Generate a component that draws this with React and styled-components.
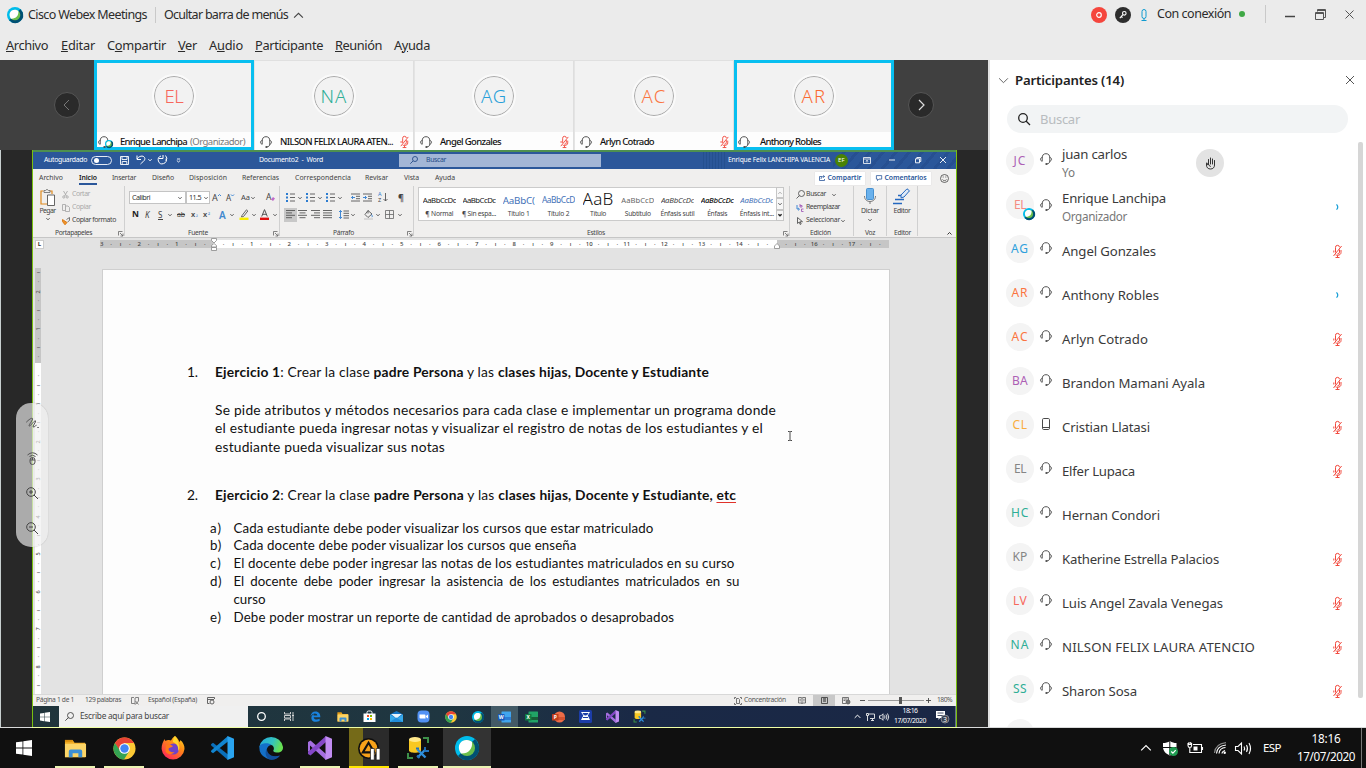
import React, { useLayoutEffect, useRef, useState } from "react";
import styled, { createGlobalStyle, css } from "styled-components";

const Global = createGlobalStyle`
  * { box-sizing: border-box; }
  html, body { margin: 0; padding: 0; overflow: hidden; }
  body { font-family: "Noto Sans", "Open Sans", sans-serif; color: #333; width: 1366px; height: 768px; }
`;

/* ---------- text fitted to a column width ---------- */

const Label = styled.span`
  display: block;
  flex: none;
  white-space: pre;
  line-height: 1;
  width: ${(p) => p.$w}px;
  margin-left: ${(p) => p.$ml || 0}px;
  font-size: ${(p) => p.$size || 8}px;
  font-weight: ${(p) => p.$weight || 400};
  font-style: ${(p) => (p.$italic ? "italic" : "normal")};
  color: ${(p) => p.$color || "inherit"};
  ${(p) => p.$justify && css`white-space: normal; text-align-last: justify;`}
`;

function T({ w, size, ml, weight, italic, color, justify, children }) {
  const inner = useRef(null);
  const [spacing, setSpacing] = useState(0);
  useLayoutEffect(() => {
    if (justify) return;
    const el = inner.current;
    const natural = el.getBoundingClientRect().width;
    const count = el.textContent.length;
    setSpacing((w - natural) / count);
  }, []);
  return (
    <Label $w={w} $size={size} $ml={ml} $weight={weight} $italic={italic} $color={color} $justify={justify}>
      <span ref={inner} style={{ letterSpacing: spacing }}>{children}</span>
    </Label>
  );
}

const Svg = styled.svg`
  display: block;
  flex: none;
  overflow: visible;
  width: ${(p) => p.$w}px;
  height: ${(p) => p.$h}px;
  margin-left: ${(p) => p.$ml || 0}px;
  margin-top: ${(p) => p.$mt || 0}px;
  fill: none;
  stroke-linecap: ${(p) => (p.$round ? "round" : "butt")};
`;

function Ic({ w = 10, h = w, vb, ml, mt, c = "#444", sw = 1, round, children }) {
  return (
    <Svg $w={w} $h={h} $ml={ml} $mt={mt} $round={round} viewBox={vb || `0 0 ${w} ${h}`} stroke={c} strokeWidth={sw}>
      {children}
    </Svg>
  );
}

const Chevron = ({ ml, c = "#555", w = 5, dir = "down", sw = 1 }) => (
  <Ic w={w} h={w} vb="0 0 10 10" ml={ml} c={c} sw={(sw * 10) / w}>
    {dir === "down" && <path d="M1 3l4 4 4-4" />}
    {dir === "up" && <path d="M1 7l4-4 4 4" />}
    {dir === "left" && <path d="M7 0L2 5l5 5" />}
    {dir === "right" && <path d="M3 0l5 5-5 5" />}
  </Ic>
);

/* ---------- shared drawings ---------- */

const WebexLogo = ({ w, ml }) => (
  <Ic w={w} vb="0 0 24 24" ml={ml} c="none">
    <circle cx="12" cy="12" r="12" fill="#00bceb" />
    <path d="M20 3A12 12 0 0 1 3 20z" fill="#005073" />
    <path d="M23 7A12 12 0 0 1 6 22.5z" fill="#005073" />
    <circle cx="12" cy="12" r="8" fill="#6abf4b" />
    <path d="M4 13C3 8 7 3.500 12 4c2 0 4 1 5 2 1 7-4 12-11 11.500A8 8 0 0 1 4 13z" fill="#fff" />
  </Ic>
);

const Headset = ({ w = 12, ml, mt }) => (
  <Ic w={w} vb="0 0 12 12" ml={ml} mt={mt} c="#555" sw={1}>
    <path d="M2.200 8V5a3.800 4.300 0 0 1 7.600 0v3c0 1.800-1 2.700-2.800 2.900" />
    <path d="M2.400 4.300C1 4.600.5 5.400.5 6.300s.5 1.700 1.900 2M9.600 4.300c1.400.3 1.900 1.100 1.900 2s-.5 1.700-1.900 2" />
    <circle cx="6.400" cy="11" r="1.100" fill="#4a4a4a" stroke="none" />
  </Ic>
);

const PhoneIcon = ({ ml, mt }) => (
  <Ic w={12} ml={ml} mt={mt} c="#4a4a4a" sw={1}>
    <rect x="2.500" y=".5" width="7" height="11" rx="1.200" />
    <path d="M2.500 9.500h7" />
  </Ic>
);

const MutedMic = ({ ml, mt, w = 9, h = 13 }) => (
  <Ic w={w} h={h} vb="0 0 9 13" ml={ml} mt={mt} c="#f2493d" sw={1}>
    <path d="M2.500 7.500V2.500a2 2 0 0 1 4-.3M6.500 4.500V7a2 2 0 0 1-2.200 2M.8 5.500v2M8 5v2.500C8 9.300 6.500 10.300 4.500 10.300c-1 0-1.500-.2-2-.5M4.500 10.300v2.200M2.500 12.500h4M.5 11L8.600 1" />
  </Ic>
);

const WindowsLogo = ({ w, ml }) => (
  <Ic w={w} vb="0 0 16 16" ml={ml} c="none">
    <path d="M0 2.300l6.500-.9v6.200H0zM7.300 1.300L16 0v7.600H7.300zM0 8.400h6.500v6.200L0 13.700zM7.300 8.400H16V16l-8.700-1.300z" fill="#fff" />
  </Ic>
);

const Explorer = ({ w }) => (
  <Ic w={w} vb="0 0 24 24" c="none">
    <path d="M1 3h8l2 3h11v15H1z" fill="#f0ab22" />
    <path d="M1 7h22v14H1z" fill="#fcd567" />
    <path d="M5 21v-6q0-2 2-2h10q2 0 2 2v6h-4v-4H9v4z" fill="#3d8fd4" />
    <path d="M1 3h8v2H1z" fill="#d98e0c" />
  </Ic>
);

const Chrome = ({ w }) => (
  <Ic w={w} vb="0 0 24 24" c="none">
    <circle cx="12" cy="12" r="11.500" fill="#fcc934" />
    <path d="M2 6.300A11.500 11.500 0 0 1 22 6.300H12L7 15z" fill="#e94335" />
    <path d="M2 6.300A11.500 11.500 0 0 0 11.500 23.500L17 14.500 8 15z" fill="#34a353" />
    <circle cx="12" cy="12" r="5.600" fill="#fff" />
    <circle cx="12" cy="12" r="4.400" fill="#4285f4" />
  </Ic>
);

const Firefox = ({ w }) => (
  <Ic w={w} vb="0 0 24 24" c="none">
    <defs>
      <linearGradient id="ff" x1="1" y1="0" x2=".3" y2="1">
        <stop offset="0" stopColor="#ffe226" /><stop offset=".45" stopColor="#ff8a16" /><stop offset="1" stopColor="#ff2a57" />
      </linearGradient>
    </defs>
    <path d="M14 0c3 2 4 5 4.500 6 1-1 .7-2 .7-2 3 2 4.500 6 4.300 9A11.500 11.500 0 0 1 .6 13C.5 9 2 5 4 3c0 1 0 1.500.5 2 1.500-1 4-1.500 5.500-.5C11 3 12 1 14 0z" fill="url(#ff)" />
    <circle cx="12.500" cy="13" r="5.500" fill="#6f42c9" />
    <path d="M5 9c3-2 5 0 7 1-1 2-4 1-4.500 3 0 2 3 4 6 3-2 3-8 3-9-1z" fill="#ff7a18" />
    <path d="M14 0c3 3 3 6 4 9 1 3 0 5-1 6 1-5-2-8-5-9 0-3 1-5 2-6z" fill="#ffd52d" />
  </Ic>
);

const VSCode = ({ w }) => (
  <Ic w={w} vb="0 0 24 24" c="none">
    <path d="M1 8.300l2-1.600L18 18.500V24L1.200 9.500z" fill="#0a6fba" />
    <path d="M1 15.700l2 1.600L18 5.500V0L1.200 14.500z" fill="#1185d0" />
    <path d="M17.500 0L24 2.800v18.400L17.500 24z" fill="#2aa4f0" />
  </Ic>
);

const EdgeNew = ({ w }) => (
  <Ic w={w} vb="0 0 24 24" c="none">
    <defs>
      <linearGradient id="eg" x1="0" y1="0" x2="1" y2=".3">
        <stop offset="0" stopColor="#22a7e0" /><stop offset=".6" stopColor="#33c3c0" /><stop offset="1" stopColor="#66e052" />
      </linearGradient>
    </defs>
    <path d="M.3 11A12 12 0 0 1 24 11c.3 4-3 6-6.500 5.500-2.500-.3-3.500-1.300-3.200-2 1-1 1-4-1.300-5.300C9 7.500 3 8 .3 11z" fill="url(#eg)" />
    <path d="M.3 11C1.500 6.500 10 6.500 12.500 9 9 9.500 7 12.500 8 16c1.200 4 6 6 12.500 4A12 12 0 0 1 .3 11z" fill="#1470c8" />
    <path d="M8 13c0 5 5 9 13 6.500-3 4.500-8.500 5-11.500 3.500C6 20 6 15 8 13z" fill="#114f9c" />
  </Ic>
);

const VisualStudio = ({ w, ml }) => (
  <Ic w={w} vb="0 0 24 24" ml={ml} c="none">
    <path d="M0 6l2.500-1.500L18 18v6L2 9.500v5L0 16z" fill="#a56ee0" />
    <path d="M0 18l2.500 1.500L18 6V0L0 16z" fill="#8447c7" />
    <path d="M17.500 0L24 2.800v18.400L17.500 24z" fill="#c18cf2" />
  </Ic>
);

const Database = ({ w }) => (
  <Ic w={w} vb="0 0 24 24" c="none">
    <path d="M3 3.500v11c0 3 12 3 12 0v-11z" fill="#f8c822" />
    <ellipse cx="9" cy="3.500" rx="6" ry="2.600" fill="#ffe88a" />
    <path d="M17 2h5v5M2 17v5h5" stroke="#3d8f49" strokeWidth="2" />
    <path d="M11.500 13.500l8 8M19.500 13.500l-8 8" stroke="#2f8fdc" strokeWidth="2.400" />
    <path d="M10 12.500h3M19 11v4h4M11 19.500l2.500 2.500" stroke="#2373bd" strokeWidth="1.800" />
  </Ic>
);

const Aimp = ({ w }) => (
  <Ic w={w} vb="0 0 24 24" c="none">
    <circle cx="11" cy="12" r="11" fill="#0f0f0f" />
    <circle cx="11" cy="12" r="9.300" fill="#f7a21a" />
    <path d="M11 6l6 10H5z" stroke="#111" strokeWidth="2.200" />
    <path d="M13 12h4v12h-4zM19 12h4v12h-4z" fill="#fff" stroke="#222" strokeWidth=".8" />
  </Ic>
);

const EdgeOld = () => (
  <Ic w={11} vb="0 0 24 24" c="none">
    <path d="M1 12C2 5 6 1 12 1c7 0 11 5 10.500 12.500H8c.5 6 8 6.500 13 3.500v5C14 25 3 24 3 15c0-4 2.500-7 6-8.500C8 8 7.800 9 7.700 10H16c0-6-10-7-15 2z" fill="#1a83de" />
  </Ic>
);

const Store = () => (
  <Ic w={13} vb="0 0 26 26" c="none">
    <path d="M8 8V5q0-3 3-3h4q3 0 3 3v3" stroke="#fff" strokeWidth="2" />
    <path d="M1 7h24v17H1z" fill="#fff" />
    <path d="M8 10h4v4H8z" fill="#f25022" /><path d="M14 10h4v4h-4z" fill="#7fba00" />
    <path d="M8 16h4v4H8z" fill="#00a4ef" /><path d="M14 16h4v4h-4z" fill="#ffb900" />
  </Ic>
);

const Mail = () => (
  <Ic w={13} h={11} vb="0 0 26 22" c="none">
    <path d="M0 7L13 0l13 7v15H0z" fill="#1474c4" />
    <path d="M2 6h22l-11 9z" fill="#e7f4fc" />
    <path d="M0 7l13 8 13-8v15H0z" fill="#37a9ea" />
    <path d="M0 22L13 13l13 9z" fill="#1f8ddb" />
  </Ic>
);

const Zoom = () => (
  <Ic w={13} vb="0 0 26 26" c="none">
    <rect x="1" y="1" width="24" height="24" rx="8" fill="#5292f5" />
    <path d="M5 9h10q2 0 2 2v6H7q-2 0-2-2zM18 12l4-3v8l-4-3z" fill="#fff" />
  </Ic>
);

const OfficeIcon = ({ letter, dark, light, mid, round }) => (
  <Ic w={13} h={12} vb="0 0 26 24" c="none">
    {round ? <circle cx="15" cy="12" r="11" fill={light} /> : <rect x="7" y="1" width="19" height="22" rx="1" fill={light} />}
    <path d="M8 12h18v6H8z" fill={mid} />
    <rect x="0" y="6" width="13" height="13" rx="1" fill={dark} />
    <text x="6.500" y="16" fontSize="10" fontWeight="700" textAnchor="middle" fill="#fff" fontFamily="Noto Sans">{letter}</text>
  </Ic>
);

/* ---------- meeting window header ---------- */

const Screen = styled.div`
  width: 1366px; height: 768px; display: flex; flex-direction: column; overflow: hidden; background: #fff;
`;
const Header = styled.header`height: 60px; flex: none; background: #ebebeb; color: #2b2b2b;`;
const HeaderRow = styled.div`
  display: flex; align-items: center; height: 30px; padding: 0 12px 0 ${(p) => p.$pl}px;
`;
const WindowTools = styled.div`display: flex; align-items: center; height: 28px; align-self: flex-start;`;
const Spacer = styled.div`flex: 1;`;
const Divider = styled.i`
  width: 1px; height: ${(p) => p.$h}px; background: #c9c9c9; margin-left: ${(p) => p.$ml || 0}px; flex: none;
`;
const Dot = styled.i`
  width: ${(p) => p.$s}px; height: ${(p) => p.$s}px; border-radius: 50%; background: ${(p) => p.$c};
  margin-left: ${(p) => p.$ml}px; flex: none;
`;

function MeetingHeader() {
  return (
    <Header>
      <HeaderRow $pl={7}>
        <WebexLogo w={16} />
        <T w={119} size={12.5} ml={5}>Cisco Webex Meetings</T>
        <Divider $h={16} $ml={8} />
        <T w={124} size={12.5} ml={8}>Ocultar barra de menús</T>
        <Chevron w={11} ml={5} dir="up" c="#444" sw={1.1} />
        <Spacer />
        <Ic w={16} c="#fff" sw={1.2}><circle cx="8" cy="8" r="8" fill="#f5463d" stroke="none" /><circle cx="8" cy="8" r="2.300" /></Ic>
        <Ic w={16} ml={8} c="#fff" sw={1.1}>
          <circle cx="8" cy="8" r="8" fill="#2d2d2d" stroke="none" /><circle cx="9.300" cy="6.300" r="1.800" /><path d="M8 7.600L4.800 11.200M6.200 9.500l1.300 1.200" />
        </Ic>
        <Ic w={6} h={12} ml={10} c="#109bd0" sw={1}><rect x="1" y=".5" width="4" height="9" rx="2" /><path d="M3 10v1.500M.5 11.500h5" /></Ic>
        <WindowTools>
          <T w={74} size={12.5} ml={10}>Con conexión</T>
          <Dot $s={6} $c="#3fa845" $ml={8} />
          <Divider $h={18} $ml={20} />
          <Ic w={10} ml={19} c="#444" sw={1.500}><path d="M0 7.500h10" /></Ic>
          <Ic w={11} ml={20} c="#555" sw={1}><path d="M.5 3.500h8v7h-8zM.5 4.500h8M2.500 2.500v-2h8v8h-1.500M2.500 1.500h8" /></Ic>
          <Ic w={9} ml={19} c="#555" sw={1}><path d="M.5.5l8 8M8.500.5l-8 8" /></Ic>
        </WindowTools>
      </HeaderRow>
      <HeaderRow $pl={6}>
        <T w={42} size={12.800}><u>A</u>rchivo</T>
        <T w={34} ml={13} size={12.800}><u>E</u>ditar</T>
        <T w={59} ml={12} size={12.800}>C<u>o</u>mpartir</T>
        <T w={19} ml={12} size={12.800}><u>V</u>er</T>
        <T w={34} ml={12} size={12.800}>A<u>u</u>dio</T>
        <T w={68} ml={12} size={12.800}><u>P</u>articipante</T>
        <T w={47} ml={12} size={12.800}><u>R</u>eunión</T>
        <T w={36} ml={12} size={12.800}>A<u>y</u>uda</T>
      </HeaderRow>
    </Header>
  );
}

/* ---------- film strip ---------- */

const Body = styled.main`display: flex; height: 667px; flex: none;`;
const Stage = styled.section`width: 988px; flex: none; display: flex; flex-direction: column; position: relative;`;
const Strip = styled.div`
  height: 90px; flex: none; background: #404040; display: flex; align-items: center; padding-left: 54px;
`;
const Nav = styled.div`
  width: 26px; height: 26px; border-radius: 50%; background: #2a2a2a; border: 1px solid #555;
  display: flex; align-items: center; justify-content: center;
  margin-left: ${(p) => p.$ml || 0}px;
`;
const Tiles = styled.div`display: flex; margin-left: 14px;`;
const Tile = styled.div`
  width: 160px; height: 90px; background: #f2f2f2; display: flex; flex-direction: column; align-items: center;
  border: ${(p) => (p.$active ? "3px solid #08bff0" : "0 solid")};
  ${(p) => !p.$active && css`padding-top: 3px; box-shadow: inset 0 1px #e0e0e0, inset -1px 0 #dedede, inset 1px 0 #e4e4e4;`}
`;
const TileCircle = styled.div`
  width: 40px; height: 40px; margin-top: 13px; border-radius: 50%; border: 1px solid #aaa; outline: 2px solid #fafafa;
  color: ${(p) => p.$c}; flex: none;
  display: flex; justify-content: center; align-items: center;
`;
const TileLabel = styled.div`
  width: ${(p) => (p.$active ? 154 : 158)}px; height: ${(p) => (p.$active ? 15 : 18)}px; margin-top: auto; background: #fdfdfd; display: flex; align-items: center;
  padding: ${(p) => (p.$active ? "4px 0 0 1px" : "1px 4px 0 5px")}; color: #111;
`;
const HostHeadset = styled.span`position: relative; display: block;`;
const HostBadge = styled.span`
  position: absolute; left: ${(p) => p.$x}px; top: ${(p) => p.$y}px;
`;

const tiles = [
  { i: "EL", iw: 19, c: "#f7675c", n: "Enrique Lanchipa", w: 67, host: true, active: true },
  { i: "NA", iw: 27, c: "#2eae96", n: "NILSON FELIX LAURA ATEN...", w: 113, muted: true },
  { i: "AG", iw: 26, c: "#279fd9", n: "Angel Gonzales", w: 61, muted: true },
  { i: "AC", iw: 25, c: "#fb7440", n: "Arlyn Cotrado", w: 54, muted: true },
  { i: "AR", iw: 25, c: "#fb6a31", n: "Anthony Robles", w: 61, active: true },
];

function FilmStrip() {
  return (
    <Strip>
      <Nav><Chevron dir="left" w={10} c="#777" /></Nav>
      <Tiles>
        {tiles.map((t) => (
          <Tile key={t.i} $active={t.active}>
            <TileCircle $c={t.c}><T w={t.iw} size={18.500} weight={300}>{t.i}</T></TileCircle>
            <TileLabel $active={t.active}>
              <HostHeadset><Headset w={12} />{t.host && <HostBadge $x={7} $y={4}><WebexLogo w={8} /></HostBadge>}</HostHeadset>
              <T w={t.w} size={9.500} ml={t.active ? 10 : 8} weight={500}>{t.n}</T>
              {t.host && <T w={55} ml={3} size={9.500} color="#777">(Organizador)</T>}
              <Spacer />
              {t.muted && <MutedMic w={9} h={12} />}
            </TileLabel>
          </Tile>
        ))}
      </Tiles>
      <Nav $ml={14}><Chevron dir="right" w={10} c="#ddd" sw={1.200} /></Nav>
    </Strip>
  );
}

/* ---------- shared desktop ---------- */

const ShareArea = styled.div`
  height: 577px; background: #282828; border-left: 1px solid #c7cfcf; padding-left: 31px; display: flex;
`;
const Shared = styled.div`
  width: 925px; height: 577px; border: solid #78c010; border-width: 0 1px; background: #f0efee;
  box-shadow: inset 0 2px #4e9050; padding-top: 2px; display: flex; flex-direction: column;
`;
const TitleBar = styled.div`
  height: 17px; background: repeating-linear-gradient(130deg, transparent 0 7px, rgba(20,50,110,.2) 7px 10px) 800px 0 / 123px 17px no-repeat,
    repeating-linear-gradient(90deg, #24508f 0 1px, transparent 1px 3px) 670px 0 / 22px 17px no-repeat, #2b579a;
  color: #fff; display: flex; align-items: center; padding: 0 0 1px 11px; flex: none;
`;
const Toggle = styled.div`
  width: 21px; height: 9px; border: 1px solid #e4eaf4; border-radius: 5px; margin-left: 4px; padding: 1px 2px;
  &::before { content: ""; display: block; width: 5px; height: 5px; border-radius: 50%; background: #fff; }
`;
const SearchBox = styled.div`
  width: 202px; height: 13px; background: #a3b6d6; margin: 0 0 0 76px; display: flex; align-items: center; padding-left: 11px; color: #264c88;
`;
const UserDot = styled.div`
  width: 13px; height: 13px; border-radius: 50%; background: #498205; margin-left: 5px; display: flex; align-items: center; justify-content: center; color: #fff;
`;

const Tabs = styled.div`height: 17px; flex: none; display: flex; align-items: center; padding: 1px 0 0 6px; color: #444;`;
const ActiveTab = styled.div`
  margin-left: 16px; position: relative; color: #222;
  &::after { content: ""; position: absolute; left: 0; right: 0; bottom: -4px; height: 2px; background: #2b579a; }
`;
const TabButton = styled.div`
  width: ${(p) => p.$w}px; height: 13px; background: #fff; color: #2b579a; display: flex; align-items: center; justify-content: center; margin-left: ${(p) => p.$ml}px;
  box-shadow: 0 0 1px #ccc;
`;

const Ribbon = styled.div`
  height: 52px; flex: none; display: flex; border-bottom: 1px solid #c6c6c6; color: #444;
`;
const Group = styled.div`
  width: ${(p) => p.$w}px; height: 50px; border-right: 1px solid #d0d0d0; flex: none; display: flex; flex-direction: column; padding-left: ${(p) => p.$pl || 0}px; padding-top: 1px;
`;
const GroupBody = styled.div`height: 41px; display: flex; flex: none;`;
const GroupFoot = styled.div`height: 8px; margin-top: 2px; display: flex; align-items: center; justify-content: flex-end; padding-right: 1px;`;
const Col = styled.div`
  display: flex; flex-direction: column; width: ${(p) => p.$w || "auto"}${(p) => (p.$w ? "px" : "")};
  ${(p) => p.$center && "align-items: center;"} gap: ${(p) => p.$gap || 0}px; padding-top: ${(p) => p.$pt || 0}px; flex: none;
`;
const Row = styled.div`display: flex; align-items: center; height: ${(p) => p.$h || 13}px; flex: none;`;
const FontBox = styled.div`
  width: ${(p) => p.$w}px; height: 13px; border: 1px solid #c4c4c4; background: #fff; display: flex; align-items: center; justify-content: space-between; padding: 0 ${(p) => p.$pr}px 0 2px; color: #333;
`;
const ActiveCell = styled.div`width: 13px; height: 14px; background: #c8c8c8; display: flex; align-items: center; justify-content: center;`;
const Gallery = styled.div`width: 366px; height: 34px; border: 1px solid #cbcbcb; background: #fff; display: flex;`;
const StyleCell = styled.div`width: 39.700px; display: flex; flex-direction: column; align-items: center; padding-left: 1px; flex: none;`;
const Sample = styled.div`height: 20px; padding-top: ${(p) => (p.$big ? 0 : 5)}px; display: flex; align-items: center; overflow: hidden;`;
const GalleryScroll = styled.div`
  width: 8px; height: 34px; margin: -1px -1px 0 auto; display: flex; flex-direction: column;
  & > div { flex: 1; border: 1px solid #c6c6c6; display: flex; align-items: center; justify-content: center; background: #f7f7f7; }
`;

const Launcher = ({ ml }) => <Ic w={5} ml={ml} c="#666" sw={0.800}><path d="M.5 4.500v-4h4M2 2l3 3M5 2.500V5H2.500" /></Ic>;
const Lines = ({ l, ml }) => (
  <Ic w={9} ml={ml} c="#555" sw={0.900}>
    {l.map(([a, b], k) => <path key={k} d={`M${a} ${0.5 + k * 2.4}H${b}`} />)}
  </Ic>
);
const Bullets = ({ ml }) => (
  <Ic w={9} ml={ml} c="#555" sw={0.900}>
    <path d="M4 1h5M4 4.500h5M4 8h5" /><path d="M0 1h2M0 4.500h2M0 8h2" stroke="#2c7cd0" strokeWidth="1.800" />
  </Ic>
);
const Indent = ({ ml, out }) => (
  <Ic w={9} ml={ml} c="#555" sw={0.900}>
    <path d="M0 1h9M5 3.300h4M5 5.700h4M0 8h9" /><path d={out ? "M4 4.500H.6M2 3L.5 4.500 2 6" : "M0 4.500h3.400M2 3l1.500 1.500L2 6"} stroke="#2c7cd0" />
  </Ic>
);

function WordTitle() {
  return (
    <TitleBar>
      <T w={43} size={6.900}>Autoguardado</T>
      <Toggle />
      <Ic w={9} ml={8} c="#fff" sw={0.900}><path d="M.5.5h8v8h-8zM2 .5v3h5v-3M2.200 8.500V5.500h4.600v3" /></Ic>
      <Ic w={10} ml={7} c="#fff" sw={1}><path d="M1 .5v4h4M1 4C3 1 7 0 8.500 2.500S6.500 7 4.500 9" /></Ic>
      <Chevron ml={2} c="#fff" w={4} />
      <Ic w={10} ml={5} c="#fff" sw={1}><path d="M9 3.500A4 4 0 1 1 4 1M6 0v3.500H2M8.500.5A4.300 4.300 0 0 1 9 6" /></Ic>
      <Ic w={5} ml={9} c="#fff" sw={0.900}><path d="M1 1h3M.8 2.500l1.700 1.500L4.200 2.500" /></Ic>
      <T w={64} ml={78} size={6.900}>Documento2  -  Word</T>
      <SearchBox>
        <Ic w={8} c="#264c88" sw={0.900}><circle cx="5" cy="3" r="2.500" /><path d="M3 5L.3 7.700" /></Ic>
        <T w={20} ml={8} size={6.900}>Buscar</T>
      </SearchBox>
      <T w={102} ml={127} size={6.700}>Enrique Felix LANCHIPA VALENCIA</T>
      <UserDot><T w={7} size={6}>EF</T></UserDot>
      <Ic w={8} h={7} ml={15} c="#fff" sw={0.800}><path d="M.5.5h7v6h-7zM.5 2h7M4 5.500v-2.200M3 4.300l1-1 1 1" /></Ic>
      <Ic w={6} ml={18} c="#fff" sw={0.900}><path d="M0 3h6" /></Ic>
      <Ic w={6} ml={20} c="#fff" sw={0.900}><path d="M.5 1.800h4v4h-4zM1.800 1.800V.5h4v4H4.500" /></Ic>
      <Ic w={6} ml={19} c="#fff" sw={0.900}><path d="M0 0l6 6M6 0L0 6" /></Ic>
    </TitleBar>
  );
}

function WordTabs() {
  const tabs = [["Insertar", 24, 15], ["Diseño", 22, 16], ["Disposición", 38, 15], ["Referencias", 37, 15], ["Correspondencia", 56, 16], ["Revisar", 23, 14], ["Vista", 15, 16], ["Ayuda", 20, 16]];
  return (
    <Tabs>
      <T w={24} size={6.900}>Archivo</T>
      <ActiveTab><T w={18} size={6.900} weight={600}>Inicio</T></ActiveTab>
      {tabs.map(([n, w, ml]) => <T key={n} w={w} ml={ml} size={6.900}>{n}</T>)}
      <TabButton $w={50} $ml={360}>
        <Ic w={6} c="#2b579a" sw={0.800}><path d="M3 1.500H.5v4h5V4M2 4c0-2 1-2.500 3.500-2.500M4.300.3L5.600 1.500 4.300 2.700" /></Ic>
        <T w={34} ml={3} size={6.900} weight={600}>Compartir</T>
      </TabButton>
      <TabButton $w={60} $ml={6}>
        <Ic w={6} c="#2b579a" sw={0.800}><path d="M.4.6h5.300v3.500H3L1.500 5.600V4.100H.4z" /></Ic>
        <T w={42} ml={3} size={6.900} weight={600}>Comentarios</T>
      </TabButton>
      <Ic w={9} ml={9} c="#444" sw={0.800}><circle cx="4.500" cy="4.500" r="4" /><path d="M2.500 5.500c1 1.500 3 1.500 4 0M3.200 2.500v1M5.800 2.500v1" /></Ic>
    </Tabs>
  );
}

const styleSamples = [
  ["AaBbCcDc", "¶ Normal", 28, "#222", 7.8, 33],
  ["AaBbCcDc", "¶ Sin espa...", 34, "#222", 7.8, 33],
  ["AaBbC(", "Título 1", 22, "#4472b8", 9.8, 32],
  ["AaBbCcD", "Título 2", 22, "#4472b8", 8.4, 33],
  ["AaB", "Título", 16, "#111", 17, 31],
  ["AaBbCcD", "Subtítulo", 26, "#666", 7.6, 33],
  ["AaBbCcDc", "Énfasis sutil", 34, "#444", 7.8, 33, true],
  ["AaBbCcDc", "Énfasis", 20, "#111", 7.8, 33, true],
  ["AaBbCcDc", "Énfasis int...", 34, "#4472b8", 7.8, 33, true],
];

function WordRibbon() {
  return (
    <Ribbon>
      <Group $w={92}>
        <GroupBody>
          <Col $w={29} $center $pt={2}>
            <Ic w={15} h={17} c="#e08a1e" sw={1.200}>
              <path d="M3.500 2H1v13h6M9 2h3v3" /><path d="M4 3.500V1.500h1.500L7 .3l1.500 1.200H10v2z" fill="#f0efee" stroke="#666" strokeWidth=".8" />
              <path d="M7.500 6h7v10.500h-7z" fill="#fff" stroke="#555" strokeWidth=".9" />
            </Ic>
            <Row $h={11}><T w={16} size={6.900}>Pegar</T></Row>
            <Chevron w={4} />
          </Col>
          <Col $pt={1}>
            <Row><Ic w={7} c="#aaa" sw={0.900}><path d="M1.500 0l3 5M5.500 0l-3 5" /><circle cx="1.800" cy="6" r="1.100" /><circle cx="5.200" cy="6" r="1.100" /></Ic><T w={18} ml={3} size={6.900} color="#aaa">Cortar</T></Row>
            <Row><Ic w={8} c="#aaa" sw={0.900}><path d="M.5.5h3v6h-3zM3.500 2h2.500l1.500 1.500v4h-4z" /></Ic><T w={19} ml={2} size={6.900} color="#aaa">Copiar</T></Row>
            <Row><Ic w={8} c="#666" sw={0.900}><path d="M4.500 2.500L7.500.5v3L5.500 5" /><path d="M.5 2.500l4.500 3-2 2.300L.5 4.500z" fill="#f0932a" stroke="#d87710" /></Ic><T w={44} ml={2} size={6.900}>Copiar formato</T></Row>
          </Col>
        </GroupBody>
        <GroupFoot><T w={37} size={6.700}>Portapapeles</T><Launcher ml={26} /></GroupFoot>
      </Group>
      <Group $w={155} $pl={4}>
        <GroupBody>
          <Col $pt={4} $gap={4}>
            <Row $h={13}>
              <FontBox $w={57} $pr={3}><T w={18} size={7.200}>Calibri</T><Chevron w={4} /></FontBox>
              <FontBox $w={24} $pr={1}><T w={12} size={7.200}>11.5</T><Chevron w={4} /></FontBox>
              <T w={6} ml={2} size={9}>A</T><Ic w={3} h={8} c="#2c7cd0" sw={0.900}><path d="M0 2l1.500-1.500L3 2" /></Ic>
              <T w={5} ml={5} size={8}>A</T><Ic w={3} h={8} c="#2c7cd0" sw={0.900}><path d="M0 .5L1.500 2 3 .5" /></Ic>
              <T w={9} ml={7} size={7.500}>Aa</T><Chevron ml={1} w={4} />
              <T w={6} ml={11} size={8.500}>A</T><Ic w={4} ml={-1} mt={3} c="none"><path d="M0 2.500L2 0l2 1.500L2 4z" fill="#c06bc9" /></Ic>
            </Row>
            <Row $h={13}>
              <T w={6} ml={3} size={8.500} weight={700} color="#222">N</T>
              <T w={5} ml={7} size={8} italic>K</T>
              <T w={5} ml={8} size={8}><u>S</u></T><Chevron ml={5} w={4} />
              <T w={8} ml={5} size={7}><s>ab</s></T>
              <T w={5} ml={6} size={7.500} weight={600}>x</T><T w={2} size={5} color="#2c7cd0">₂</T>
              <T w={5} ml={5} size={7.500} weight={600}>x</T><T w={2} size={6} color="#2c7cd0">²</T>
              <T w={7} ml={9} size={10} weight={600} color="#4088ce">A</T><Chevron ml={4} w={4} />
              <Ic w={10} h={11} ml={5} c="#555" sw={0.900}><path d="M3 6.500L7.500.8l1.300 1.200L4.500 7.500l-2 .5z" /><path d="M.5 9.800h9" stroke="#f8ee00" strokeWidth="2.400" /></Ic><Chevron ml={3} w={4} />
              <Ic w={9} h={11} ml={4} c="#555" sw={1}><path d="M1.700 7.500L4.500.6l2.800 6.900M2.600 5.300h3.800" /><path d="M0 9.800h9" stroke="#e01010" strokeWidth="2.400" /></Ic><Chevron ml={4} w={4} />
            </Row>
          </Col>
        </GroupBody>
        <GroupFoot><T w={20} size={6.700}>Fuente</T><Launcher ml={65} /></GroupFoot>
      </Group>
      <Group $w={134} $pl={4}>
        <GroupBody>
          <Col $pt={4} $gap={4}>
            <Row>
              <Bullets ml={2} /><Chevron ml={3} w={4} /><Bullets ml={4} /><Chevron ml={3} w={4} /><Bullets ml={4} /><Chevron ml={3} w={4} />
              <Indent ml={9} out /><Indent ml={3} />
              <Col $w={6}><T w={5} ml={6} size={5.500} color="#2c7cd0">A</T><T w={5} ml={6} size={5.500}>Z</T></Col>
              <Ic w={5} h={9} ml={5} c="#555" sw={0.900}><path d="M2.500 0v8M.5 6l2 2 2-2" /></Ic>
              <T w={6} ml={10} size={9} weight={600}>¶</T>
            </Row>
            <Row>
              <ActiveCell><Lines l={[[0, 9], [0, 6], [0, 9], [0, 6]]} /></ActiveCell>
              <Lines ml={1} l={[[0, 9], [1.500, 7.500], [0, 9], [1.500, 7.500]]} />
              <Lines ml={4} l={[[0, 9], [3, 9], [0, 9], [3, 9]]} />
              <Lines ml={3} l={[[0, 9], [0, 9], [0, 9], [0, 9]]} />
              <Ic w={10} h={9} ml={7} c="#555" sw={0.900}><path d="M4.500 1H10M4.500 3.300H10M4.500 5.700H10M4.500 8H10" /><path d="M1.500.5v8M0 2L1.500.5 3 2M0 7l1.500 1.500L3 7" stroke="#2c7cd0" /></Ic><Chevron ml={2} w={4} />
              <Ic w={9} ml={9} c="#555" sw={0.900}><path d="M4 .5l4 3.500-4 3.500L1 4.500zM4 .5v3" /><path d="M7.500 4.500c1 1.500 1 2.500.3 2.500" stroke="#2c7cd0" /><path d="M0 9h9" stroke="#bbb" /></Ic><Chevron ml={3} w={4} />
              <Ic w={9} ml={5} c="#666" sw={0.800}><path d="M.5.5h8v8h-8zM4.500.5v8M.5 4.500h8" /></Ic><Chevron ml={4} w={4} />
            </Row>
          </Col>
        </GroupBody>
        <GroupFoot><T w={21} size={6.700}>Párrafo</T><Launcher ml={53} /></GroupFoot>
      </Group>
      <Group $w={376} $pl={4}>
        <GroupBody>
          <Gallery>
            {styleSamples.map(([s, n, lw, c, size, w, it]) => (
              <StyleCell key={n}>
                <Sample $big={size > 12}><T w={w} size={size} color={c} italic={it} weight={n === "Énfasis" ? 500 : size > 12 ? 300 : 400}>{s}</T></Sample>
                <Row $h={12}><T w={lw} size={6.700}>{n}</T></Row>
              </StyleCell>
            ))}
            <GalleryScroll><div><Chevron dir="up" w={4} c="#aaa" /></div><div><Chevron w={4} /></div><div><Chevron w={4} c="#222" sw={1.300} /></div></GalleryScroll>
          </Gallery>
        </GroupBody>
        <GroupFoot><T w={18} size={6.700}>Estilos</T><Launcher ml={178} /></GroupFoot>
      </Group>
      <Group $w={64} $pl={6}>
        <GroupBody>
          <Col $pt={1}>
            <Row><Ic w={9} c="#555" sw={0.900}><circle cx="5.500" cy="3.500" r="3" /><path d="M3.500 5.500L.5 8.500" /></Ic><T w={20} ml={1} size={6.900}>Buscar</T><Chevron ml={6} w={4} /></Row>
            <Row><Ic w={8} c="#2c7cd0" sw={0.900}><path d="M1 1v4h2M2.200 4l1.300 1.200L2.200 6.400" /><path d="M4 0v3h2V1.500H4M7.500 5H5.500v2.500h2" stroke="#a25ab8" /></Ic><T w={34} ml={2} size={6.900}>Reemplazar</T></Row>
            <Row><Ic w={7} h={8} ml={1} c="#555" sw={0.900}><path d="M.5.5v6l1.700-1.500 1 2.500 1-.5-1-2.300h2.300z" /></Ic><T w={34} ml={2} size={6.900}>Seleccionar</T><Chevron ml={1} w={4} /></Row>
          </Col>
        </GroupBody>
        <GroupFoot><T w={21} ml={14} size={6.700}>Edición</T><Spacer /></GroupFoot>
      </Group>
      <Group $w={33}>
        <GroupBody>
          <Col $w={32} $center $pt={1}>
            <Ic w={12} h={16} c="#777" sw={1}><rect x="2.500" y=".5" width="7" height="11" rx="1" fill="#6ab1ec" stroke="#4791d0" /><path d="M.5 8c0 4 3 5.500 5.500 5.500S11.500 12 11.500 8M6 13.500V16" /></Ic>
            <Row $h={14}><T w={18} size={6.900}>Dictar</T></Row>
            <Chevron w={4} />
          </Col>
        </GroupBody>
        <GroupFoot><T w={10} ml={11} size={6.700}>Voz</T><Spacer /></GroupFoot>
      </Group>
      <Group $w={31}>
        <GroupBody>
          <Col $w={30} $center $pt={1}>
            <Ic w={18} h={17} c="#2468c0" sw={1.600}><path d="M0 15.500h9M2 11.500h9M5 7.500h7" /><path d="M8 7L14 .8l2.500 2L11 9l-3 .8z" fill="#dfe9f6" strokeWidth="1" /></Ic>
            <Row $h={13}><T w={17} size={6.900}>Editor</T></Row>
          </Col>
        </GroupBody>
        <GroupFoot><T w={17} ml={7} size={6.700}>Editor</T><Spacer /></GroupFoot>
      </Group>
      <Col $pt={45}><Chevron ml={29} dir="up" w={5} c="#333" /></Col>
    </Ribbon>
  );
}

/* rulers: four cells to each centimetre, the first one holds the number */
const Ruler = styled.div`
  height: 12px; flex: none; display: flex; align-items: center; background: #e3e3e3; padding-left: 2px; position: relative;
`;
const TabMark = styled.div`width: 9px; height: 9px; border: 1px solid #ccc; background: #fff; font-size: 6px; line-height: 6px; text-align: center; font-weight: 700;`;
const RulerTrack = styled.div`
  width: 789px; height: 8px; margin-left: 56px; display: flex; align-items: center; color: #444;
  background: linear-gradient(90deg, #c6c6c6 0 113px, #fff 113px 677px, #c6c6c6 677px);
`;
const RulerCell = styled.span`width: 9.380px; flex: none; text-align: center; font-size: 6px; line-height: 8px; margin-left: ${(p) => (p.$first ? -3 : 0)}px; font-weight: 500; white-space: nowrap;`;
const Marker = styled.div`position: absolute; left: ${(p) => p.$x}px; top: ${(p) => p.$y}px;`;
const Workspace = styled.div`height: 444px; flex: none; display: flex; background: #e3e3e3; overflow: hidden;`;
const VRuler = styled.div`
  width: 6px; margin: 18px 0 0 2px; display: flex; flex-direction: column; flex: none; overflow: hidden; color: #555;
  background: linear-gradient(#c6c6c6 0 95px, #fff 95px);
`;
const VCell = styled.span`height: 9.380px; flex: none; width: 6px; font-size: 5.500px; line-height: 6px; font-weight: 500; writing-mode: vertical-rl; transform: rotate(180deg); text-align: center;`;

const mark = (k, from) => {
  const q = k % 4;
  if (q === 1 || q === 3) return "·";
  if (q === 2) return "ı";
  const n = Math.abs(from + k / 4);
  return n === 0 || n === 15 ? "" : String(n);
};

const Page = styled.article`
  width: 788px; height: 426px; margin: 19px 0 0 61px; background: #fdfdfd; border: 1px solid #cfcfcf; border-bottom: 0; padding: 93px 0 0 84px;
  font-family: Lato, "Liberation Sans", sans-serif; color: #111; position: relative; flex: none;
`;
const Line = styled.div`
  height: ${(p) => p.$h || 18.500}px; display: flex; align-items: center; margin-top: ${(p) => p.$mt || 0}px; padding-left: ${(p) => p.$pl || 0}px;
`;
const Misspelt = styled.b`text-decoration: underline; text-decoration-color: #e0322a; text-decoration-thickness: 1px; text-underline-offset: 2px;`;

const points = [
  ["a)", "Cada estudiante debe poder visualizar los cursos que estar matriculado", 420],
  ["b)", "Cada docente debe poder visualizar los cursos que enseña", 343],
  ["c)", "El docente debe poder ingresar las notas de los estudiantes matriculados en su curso", 501],
  ["d)", "El docente debe poder ingresar la asistencia de los estudiantes matriculados en su", 506, true],
  ["", "curso", 32],
  ["e)", "Debe poder mostrar un reporte de cantidad de aprobados o desaprobados", 441],
];

function WordDocument() {
  const s = 13.8;
  return (
    <>
      <Ruler>
        <TabMark>L</TabMark>
        <RulerTrack>{Array.from({ length: 84 }, (_, k) => <RulerCell key={k} $first={k === 0}>{mark(k, -3)}</RulerCell>)}</RulerTrack>
        <Marker $x={178} $y={0}><Ic w={6} h={13} c="#888" sw={0.800}><path d="M.5.5h5v2L3 5 .5 2.500zM3 5.500l2.500 2v1.500h-5V7.500zM.5 9.500h5v3h-5z" fill="#fff" /></Ic></Marker>
        <Marker $x={741} $y={5}><Ic w={6} h={6} c="#888" sw={0.800}><path d="M3 .5l2.500 2.500v2.500h-5V3z" fill="#fff" /></Ic></Marker>
      </Ruler>
      <Workspace>
        <VRuler>{Array.from({ length: 46 }, (_, k) => <VCell key={k}>{mark(k + 2, -3)}</VCell>)}</VRuler>
        <Page>
          <Line><T w={11} size={s}>1.</T><T w={494} ml={17} size={s}><b>Ejercicio 1</b>: Crear la clase <b>padre Persona</b> y las <b>clases hijas, Docente y Estudiante</b></T></Line>
          <Line $mt={19} $pl={28}><T w={561} size={s}>Se pide atributos y métodos necesarios para cada clase e implementar un programa donde</T></Line>
          <Line $pl={28}><T w={548} size={s}>el estudiante pueda ingresar notas y visualizar el registro de notas de los estudiantes y el</T></Line>
          <Line $pl={28}><T w={230} size={s}>estudiante pueda visualizar sus notas</T></Line>
          <Line $mt={29.500}><T w={11} size={s}>2.</T><T w={521} ml={17} size={s}><b>Ejercicio 2</b>: Crear la clase <b>padre Persona</b> y las <b>clases hijas, Docente y Estudiante, </b><Misspelt>etc</Misspelt></T></Line>
          {points.map(([m, t, w, j], k) => (
            <Line key={k} $h={17.800} $mt={k === 0 ? 15.300 : 0} $pl={23}>
              <T w={12} size={13.300}>{m}</T><T w={w} ml={11.500} size={13.300} justify={j}>{t}</T>
            </Line>
          ))}
          <Marker $x={684} $y={161}><Ic w={6} h={10} c="#333" sw={0.900}><path d="M1 .5h1.500l.5.5.5-.5H5M3 1v8M1 9.500h1.500L3 9l.5.5H5" /></Ic></Marker>
        </Page>
      </Workspace>
    </>
  );
}

const StatusBar = styled.div`
  height: 12px; flex: none; background: #f0efee; border-top: 1px solid #d8d8d8; display: flex; align-items: center; padding-left: 3px; color: #555;
`;
const ViewActive = styled.div`width: 22px; height: 11px; margin-left: 7px; background: #c8c8c8; display: flex; align-items: center; justify-content: center;`;
const ZoomTrack = styled.div`
  width: 56px; height: 1px; background: #999; margin-left: 3px; position: relative;
  &::after { content: ""; position: absolute; left: 31px; top: -3px; width: 3px; height: 7px; background: #555; }
`;

function WordStatus() {
  return (
    <StatusBar>
      <T w={38} size={6.700}>Página 1 de 1</T>
      <T w={36} ml={11} size={6.700}>129 palabras</T>
      <Ic w={8} ml={10} c="#666" sw={0.800}><path d="M3 .5H.5v6H3l1 .5V1L5 .5h2.500V4M4.500 4l3 3.500M7.500 4l-3 3.500" /></Ic>
      <T w={49} ml={9} size={6.700}>Español (España)</T>
      <Ic w={8} ml={10} c="#555" sw={0.900}><path d="M.5.5h7v1.500M.5.5v6h2M1 2.500h6" /><circle cx="5" cy="5" r="2" /></Ic>
      <Ic w={8} ml={519} c="#555" sw={0.800}><path d="M.5 2V.5H2M6 .5h1.500V2M.5 6v1.500H2M6 7.500h1.500V6M2.500 1.500h2l1 1v4h-3z" /></Ic>
      <T w={42} ml={2} size={6.700}>Concentración</T>
      <Ic w={8} h={7} ml={12} c="#555" sw={0.800}><path d="M4 1v5.500M.5.500H3l1 .5 1-.5h2.500v5.500H5l-1 .5-1-.5H.5zM1.500 2.300h1.300M1.500 3.800h1.300M5.300 2.300h1.300M5.300 3.800h1.300" /></Ic>
      <ViewActive><Ic w={7} c="#444" sw={0.900}><path d="M.5.5h6v6h-6zM2 1.800h3M2 3h3M2 4.200h3" /></Ic></ViewActive>
      <Ic w={8} h={7} ml={7} c="#555" sw={0.800}><path d="M4 6.500H.5v-6h6V3M1.500 2h4M1.500 3.500h2" /><circle cx="6" cy="5" r="2" fill="#777" /></Ic>
      <Ic w={5} ml={10} c="#444" sw={0.900}><path d="M0 2.500h5" /></Ic>
      <ZoomTrack />
      <Ic w={5} ml={2} c="#444" sw={0.900}><path d="M0 2.500h5M2.500 0v5" /></Ic>
      <T w={15} ml={6} size={6.700}>180%</T>
    </StatusBar>
  );
}

const InnerTaskbar = styled.div`
  height: 21px; flex: none; background: linear-gradient(90deg, #20343b, #1f3641 45%, #1a2946 65%, #1a2745); display: flex; align-items: center; color: #fff;
`;
const InnerStart = styled.div`width: 26px; padding-left: 7px;`;
const InnerSearch = styled.div`
  width: 189px; height: 21px; background: #f0f0f0; display: flex; align-items: center; padding-left: 6px; color: #444;
`;
const InnerCell = styled.div`
  width: 27px; height: 21px; display: flex; align-items: center; justify-content: center; background: ${(p) => (p.$on ? "#435a66" : "transparent")};
`;
const ShowDesktop = styled.i`width: 1px; height: 21px; background: #67738a; margin-left: 6px;`;

function RemoteTaskbar() {
  const apps = [
    <Ic w={9} c="#fff" sw={1.300}><circle cx="4.500" cy="4.500" r="3.800" /></Ic>,
    <Ic w={10} h={9} c="#ddd" sw={0.900}><path d="M.5 0v2h6V0M.5 9V7h6v2M.5 3.500h6v2.500h-6zM9 0v9M8 3.500h2" /></Ic>,
    <EdgeOld />, <Explorer w={12} />, <Store />, <Mail />, <Zoom />, <Chrome w={12} />, <WebexLogo w={12} />,
    <OfficeIcon letter="W" dark="#185abd" light="#41a5ee" mid="#2b7cd3" />,
    <OfficeIcon letter="X" dark="#107c41" light="#21a366" mid="#185c37" />,
    <OfficeIcon letter="P" dark="#c43e1c" light="#ed6c47" mid="#d35230" round />,
    <Ic w={13} c="none"><rect width="13" height="13" rx="1.500" fill="#1c3da8" /><path d="M2 2h9L8.800 5.500 11 10H2l2.300-4.500z" fill="#fff" /><path d="M4 3.500h5L7.500 5h-2zM4 7.500h5" fill="#1c3da8" stroke="#1c3da8" /></Ic>,
    <VisualStudio w={13} />, <Database w={13} />,
  ];
  return (
    <InnerTaskbar>
      <InnerStart><WindowsLogo w={10} /></InnerStart>
      <InnerSearch>
        <Ic w={9} c="#444" sw={0.900}><circle cx="5.500" cy="3.500" r="3" /><path d="M3.500 5.500L.3 8.700" /></Ic>
        <T w={89} ml={6} size={8.300}>Escribe aquí para buscar</T>
      </InnerSearch>
      {apps.map((a, k) => <InnerCell key={k} $on={k === 9}>{a}</InnerCell>)}
      <Chevron ml={201} dir="up" w={7} c="#fff" />
      <Ic w={9} h={8} ml={5} c="#eee" sw={0.900}><path d="M3 1h5.500v4.500H4M5 7.500h3M6.500 5.500v2M1.500 3v5M.5.5h2v2h-2z" /></Ic>
      <Ic w={10} h={8} ml={4} c="#eee" sw={0.900}><path d="M.5 2.800h1.500l2-2v6.500l-2-2H.5zM5.500 2.500q1 1.500 0 3M7 1.500q1.800 2.500 0 5M8.500.5q2.500 3.500 0 7" /></Ic>
      <Col $center $w={42} $gap={3}><T w={15} size={6.900}>18:16</T><T w={32} size={6.900}>17/07/2020</T></Col>
      <Ic w={13} h={12} ml={5} c="none"><path d="M0 0h9v7H4L2.500 9V7H0z" fill="#fff" /><path d="M1.500 2h6M1.500 4.500h6" stroke="#1a2745" strokeWidth=".8" /><circle cx="9" cy="8" r="4" fill="#3b4252" stroke="#bbb" strokeWidth=".6" /><text x="9" y="10.500" fontSize="7" textAnchor="middle" fill="#fff" fontFamily="Noto Sans">3</text></Ic>
      <ShowDesktop />
    </InnerTaskbar>
  );
}

const Pill = styled.div`
  position: absolute; left: 16px; top: 343px; width: 32px; height: 144px; border-radius: 15px; background: rgba(240, 240, 240, .66);
  box-shadow: 0 0 1px rgba(0,0,0,.3); display: flex; flex-direction: column; align-items: center; gap: 21px; padding-top: 14px;
`;

function FloatingTools() {
  return (
    <Pill>
      <Ic w={13} h={13} c="#555" sw={1} round><path d="M.5 5C2.500 3 5.500.5 6.500 1.500S2 8.500 3.200 9 8.500 3 9.500 3.800 6 9.500 7.200 10s2-1.500 3-1.700" /><circle cx="12" cy="10.500" r=".2" /></Ic>
      <Ic w={13} h={14} c="#555" sw={1}><path d="M1.500 4q5-4.500 10 0M3.500 5.500q3-2.500 6 0M4 9a2.500 2.500 0 0 1 5 0v2a2.500 2.500 0 0 1-5 0zM4 9h5M6.500 6.500V9" /></Ic>
      <Ic w={12} h={14} c="#444" sw={1}><circle cx="5" cy="6" r="4.300" /><path d="M8 9l4 4M3 6h4M5 4v4" /></Ic>
      <Ic w={12} h={14} c="#444" sw={1}><circle cx="5" cy="6" r="4.300" /><path d="M8 9l4 4M3 6h4" /></Ic>
    </Pill>
  );
}

/* ---------- participants ---------- */

const Panel = styled.aside`
  width: 378px; height: 667px; border-left: 2px solid #e2e2e2; background: #fff; display: flex; flex-direction: column; color: #3a3a3a; overflow: hidden;
`;
const PanelHead = styled.div`height: 40px; display: flex; align-items: center; padding: 1px 12px 0 8px; flex: none;`;
const Search = styled.div`
  width: 341px; height: 28px; margin: 5px 0 0 17px; border-radius: 14px; background: #f2f4f5; display: flex; align-items: center; padding-left: 11px; flex: none;
`;
const ListWrap = styled.div`display: flex; margin-top: 6px; height: 588px; overflow: hidden;`;
const List = styled.div`width: 366px; flex: none;`;
const Scroll = styled.div`width: 5px; height: 556px; margin: 3px 0 0 2px; background: #d6d6d6; border-radius: 2px;`;
const Person = styled.div`height: 44px; display: flex; padding: 0 14px 0 16px; align-items: flex-start;`;
const Avatar = styled.div`
  width: 28px; height: 28px; border-radius: 50%; background: #f4f4f4; margin-top: 8px; color: ${(p) => p.$c};
  display: flex; align-items: center; justify-content: center; position: relative; flex: none;
`;
const Names = styled.div`margin-left: 10px; padding-top: ${(p) => (p.$two ? 9 : 18)}px; display: flex; flex-direction: column; gap: 6px; width: 124px;`;
const Hand = styled.div`
  width: 28px; height: 28px; border-radius: 50%; background: #e3e3e3; margin: 10px 0 0 10px; display: flex; align-items: center; justify-content: center;
`;
const Speaking = styled.div`margin: 21px 3px 0 0;`;

const people = [
  { i: "JC", iw: 13, c: "#ad5fb5", n: "juan carlos", w: 65, sub: "Yo", sw: 13, hand: true, none: true },
  { i: "EL", iw: 12, c: "#f58b82", n: "Enrique Lanchipa", w: 104, sub: "Organizador", sw: 65, host: true, talk: true },
  { i: "AG", iw: 18, c: "#2ea0dc", n: "Angel Gonzales", w: 94 },
  { i: "AR", iw: 17, c: "#fb7440", n: "Anthony Robles", w: 97, talk: true },
  { i: "AC", iw: 17, c: "#fb7440", n: "Arlyn Cotrado", w: 86 },
  { i: "BA", iw: 16, c: "#ad5fb5", n: "Brandon Mamani Ayala", w: 143 },
  { i: "CL", iw: 15, c: "#f9ad3d", n: "Cristian Llatasi", w: 88, phone: true },
  { i: "EL", iw: 12, c: "#858585", n: "Elfer Lupaca", w: 73 },
  { i: "HC", iw: 18, c: "#2eae96", n: "Hernan Condori", w: 98, none: true },
  { i: "KP", iw: 15, c: "#858585", n: "Katherine Estrella Palacios", w: 157 },
  { i: "LV", iw: 14, c: "#f7675c", n: "Luis Angel Zavala Venegas", w: 161 },
  { i: "NA", iw: 19, c: "#2eae96", n: "NILSON FELIX LAURA ATENCIO", w: 193 },
  { i: "SS", iw: 14, c: "#2eae96", n: "Sharon Sosa", w: 75 },
];

function Participants() {
  return (
    <Panel>
      <PanelHead>
        <Chevron w={11} c="#666" sw={1} />
        <T w={109} ml={6} size={13.200} weight={600} color="#222">Participantes (14)</T>
        <Spacer />
        <Ic w={8} mt={-2} c="#555" sw={1}><path d="M0 0l8 8M8 0L0 8" /></Ic>
      </PanelHead>
      <Search>
        <Ic w={12} c="#222" sw={1.300}><circle cx="5" cy="5" r="4.300" /><path d="M8 8l4 4" /></Ic>
        <T w={40} ml={10} size={13} color="#b8bcbf">Buscar</T>
      </Search>
      <ListWrap>
        <List>
          {people.map((p) => (
            <Person key={p.n}>
              <Avatar $c={p.c}>
                <T w={p.iw} size={12}>{p.i}</T>
                {p.host && <HostBadge $x={17} $y={17}><WebexLogo w={12} /></HostBadge>}
              </Avatar>
              {p.phone ? <PhoneIcon ml={6} mt={15} /> : <Headset ml={6} mt={p.hand ? 14 : p.host ? 16 : 15} />}
              <Names $two={!!p.sub}>
                <T w={p.w} size={13.200}>{p.n}</T>
                {p.sub && <T w={p.sw} size={11.700} color="#777">{p.sub}</T>}
              </Names>
              {p.hand && (
                <Hand>
                  <Ic w={11} h={13} c="#333" sw={1} round><path d="M1.500 6.500V8c0 2.500 1.500 4 4 4s4-1.500 4-4V3.500M3.500 7V2.500M5.500 7V1M7.500 7V2M1.500 6c.8-.3 1.600.6 2 1.500M2.500 7.500c1 0 2.500.5 2.800 2" /></Ic>
                </Hand>
              )}
              <Spacer />
              {p.talk && <Speaking><Ic w={3} h={6} c="#1ba0d7" sw={1.200}><path d="M.5.3q2.500 2.700 0 5.400" /></Ic></Speaking>}
              {!p.talk && !p.none && <MutedMic mt={18} />}
            </Person>
          ))}
          <Person><Avatar $c="#aaa" /></Person>
        </List>
        <Scroll />
      </ListWrap>
    </Panel>
  );
}

/* ---------- local taskbar ---------- */

const Taskbar = styled.footer`
  height: 41px; flex: none; background: #101010; display: flex; align-items: center; color: #fff;
  border-top: 1px solid #d9dada; position: relative;
`;
const ShareEdge = styled.i`position: absolute; left: 32px; top: -1px; width: 925px; height: 1px; background: #f0ffa5;`;
const TaskCell = styled.div`
  width: 48px; height: 40px; margin-right: 1px; display: flex; align-items: center; justify-content: center; position: relative;
  background: ${(p) => (p.$focus ? "#333" : "transparent")};
  ${(p) => p.$line && css`&::after { content: ""; position: absolute; bottom: 0; height: 2px; left: ${p.$focus ? 0 : 4}px; right: ${p.$focus ? 0 : 4}px; background: ${p.$line}; }`}
`;
const StartCell = styled(TaskCell)`margin-right: 3px;`;
const Paused = styled.div`
  width: 40px; height: 40px; display: flex; align-items: center; justify-content: center; background: linear-gradient(90deg, #756a18 0 14px, #2b2b2b 14px);
`;
const Clock = styled.div`width: 66px; display: flex; flex-direction: column; align-items: center; gap: 6px; margin-left: 12px; font-size: 12px;`;
const DesktopEdge = styled(Divider)`margin: 0 4px 0 2px; background: #777;`;

function LocalTaskbar() {
  const pale = "#eaf3b2";
  return (
    <Taskbar>
      <ShareEdge />
      <StartCell><WindowsLogo w={16} /></StartCell>
      <TaskCell $line={pale}><Explorer w={23} /></TaskCell>
      <TaskCell $line={pale}><Chrome w={23} /></TaskCell>
      <TaskCell><Firefox w={24} /></TaskCell>
      <TaskCell><VSCode w={24} /></TaskCell>
      <TaskCell><EdgeNew w={24} /></TaskCell>
      <TaskCell $line={pale}><VisualStudio w={24} /></TaskCell>
      <TaskCell $line="#ffe600"><Paused><Aimp w={23} /></Paused></TaskCell>
      <TaskCell $line={pale}><Database w={24} /></TaskCell>
      <TaskCell $focus $line={pale}><WebexLogo w={24} /></TaskCell>
      <Spacer />
      <Chevron dir="up" w={12} c="#fff" sw={1.200} />
      <Ic w={15} h={15} ml={11} c="none">
        <path d="M7 0C5 1.500 2.500 2 0 2v4c0 4 3 7 7 8.500 4-1.500 6.500-4.500 6.500-8.500V2C11 2 9 1.500 7 0z" fill="#fff" /><path d="M6.800 0v14M0 6.500h13.500" stroke="#101010" />
        <circle cx="10.500" cy="10.500" r="4.500" fill="#1f9a50" /><path d="M8.300 10.500l1.600 1.600 2.800-3" stroke="#fff" strokeWidth="1.200" />
      </Ic>
      <Ic w={16} h={13} ml={9} c="#fff" sw={1.100}><path d="M6 2.500h8.500v8H6M15.500 5v3M1 1v2.500q0 2 1.800 2T4.600 3.500V1M.5 2.500h4.600M2 0v2M3.700 0v2M2.800 5.500V10.500h3.500" /><path d="M6.500 4.500h4v4h-4z" fill="#fff" stroke="none" /></Ic>
      <Ic w={12} h={12} ml={11} c="#fff" sw={1.100}><path d="M8 11.500Q8 9.500 11 8.500" /><path d="M5 11.500Q5.500 6 11.500 5.500M2.500 11.500Q3 4 12 3" /><path d="M.5 11Q1 2 12 .6" stroke="#888" /><circle cx="10.700" cy="10.800" r="1.200" fill="#fff" stroke="none" /></Ic>
      <Ic w={17} h={13} ml={9} c="#fff" sw={1.100}><path d="M.5 4.500H3l3.500-3.500v11L3 8.500H.5zM9 4.500q1.200 2 0 4M11.500 3q2 3.500 0 7M14 1q3 5.500 0 11" /></Ic>
      <T w={18} ml={11} size={11.500}>ESP</T>
      <Clock><T w={29} size={11.700}>18:16</T><T w={58} size={11.700}>17/07/2020</T></Clock>
      <DesktopEdge $h={40} />
    </Taskbar>
  );
}

export default function App() {
  return (
    <Screen>
      <Global />
      <MeetingHeader />
      <Body>
        <Stage>
          <FilmStrip />
          <ShareArea>
            <Shared>
              <WordTitle />
              <WordTabs />
              <WordRibbon />
              <WordDocument />
              <WordStatus />
              <RemoteTaskbar />
            </Shared>
          </ShareArea>
          <FloatingTools />
        </Stage>
        <Participants />
      </Body>
      <LocalTaskbar />
    </Screen>
  );
}
